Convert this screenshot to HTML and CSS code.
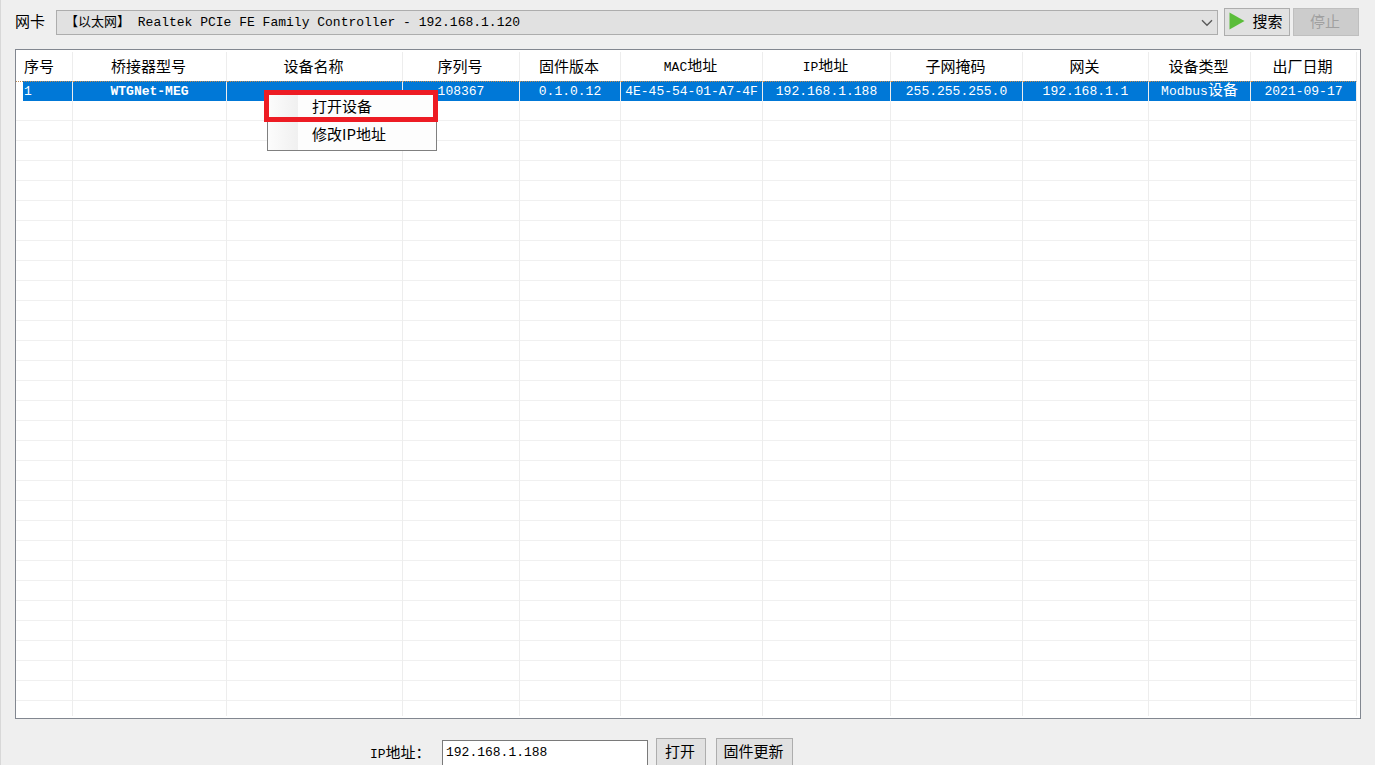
FILE: index.html
```html
<!DOCTYPE html>
<html lang="zh-CN">
<head>
<meta charset="utf-8">
<title>设备搜索</title>
<link rel="stylesheet" href="styles.css">
</head>
<body>
<main class="window">
  <form class="toolbar">
    <label class="toolbar-label" for="adapter">网卡</label>
    <div class="combo">
      <select class="combo-select" id="adapter">
        <option>【以太网】 Realtek PCIe FE Family Controller - 192.168.1.120</option>
      </select>
      <svg class="combo-arrow" viewBox="0 0 12 8" aria-hidden="true"><path d="M1 1.2 6 6.2 11 1.2" fill="none" stroke="#5a5a5a" stroke-width="1.4"/></svg>
    </div>
    <button class="btn btn-search" type="button">
      <svg class="play" viewBox="0 0 16 18" aria-hidden="true"><path d="M0.500 0.500 15.500 9 0.500 17.500z" fill="#5bbd3a"/></svg>
      搜索
    </button>
    <button class="btn btn-stop" type="button" disabled>停止</button>
  </form>

  <section class="panel">
    <table class="grid">
      <colgroup>
        <col class="c-index"><col class="c-model"><col class="c-name"><col class="c-serial"><col class="c-firmware"><col class="c-mac"><col class="c-ip"><col class="c-mask"><col class="c-gateway"><col class="c-type"><col class="c-date">
      </colgroup>
      <thead>
        <tr>
          <th class="index">序号</th>
          <th>桥接器型号</th>
          <th>设备名称</th>
          <th>序列号</th>
          <th>固件版本</th>
          <th><span class="latin">MAC</span>地址</th>
          <th><span class="latin">IP</span>地址</th>
          <th>子网掩码</th>
          <th>网关</th>
          <th>设备类型</th>
          <th>出厂日期</th>
        </tr>
      </thead>
      <tbody>
        <tr class="selected">
          <td class="index">1</td>
          <td class="model">WTGNet-MEG</td>
          <td></td>
          <td>108367</td>
          <td>0.1.0.12</td>
          <td>4E-45-54-01-A7-4F</td>
          <td>192.168.1.188</td>
          <td>255.255.255.0</td>
          <td>192.168.1.1</td>
          <td>Modbus<span class="cjk">设备</span></td>
          <td>2021-09-17</td>
        </tr>
        <tr class="blank"><td></td><td></td><td></td><td></td><td></td><td></td><td></td><td></td><td></td><td></td><td></td></tr>
      </tbody>
    </table>
    <div class="menu">
      <button class="menu-item marked" type="button">打开设备</button>
      <button class="menu-item" type="button">修改IP地址</button>
    </div>
  </section>

  <form class="footer">
    <label class="footer-label" for="ip"><span class="latin">IP</span>地址：</label>
    <input class="ip-input" id="ip" type="text" value="192.168.1.188">
    <button class="btn btn-open" type="button">打开</button>
    <button class="btn btn-update" type="button">固件更新</button>
  </form>
</main>
</body>
</html>
```
FILE: styles.css
```css
* {
  box-sizing: border-box;
}

body {
  margin: 0;
  overflow: hidden;
  background: #efefef;
  color: #000;
  font-family: "Noto Sans CJK SC", sans-serif;
  font-size: 15px;
  line-height: 20px;
}

.window {
  display: flex;
  flex-direction: column;
  height: 100vh;
  padding: 8px 14px 0;
  border-left: 1px solid #d8d8d8;
}

.latin {
  font-family: "Liberation Mono", monospace;
  font-size: 13px;
  line-height: 16px;
}

.cjk {
  font-family: "Noto Sans CJK SC", sans-serif;
  font-size: 15px;
}

/* Toolbar */
.toolbar {
  display: flex;
  align-items: center;
  height: 28px;
  margin: 0 2px 13px 0;
}

.toolbar-label {
  width: 41px;
  padding-bottom: 2px;
}

.combo {
  position: relative;
  flex: 1;
  margin-right: 6px;
}

.combo-select {
  display: block;
  width: 100%;
  height: 25px;
  padding: 0 24px 0 8px;
  border: 1px solid #adadad;
  border-radius: 0;
  background: #e1e1e1;
  color: #000;
  font-family: "Liberation Mono", "Noto Sans CJK SC", monospace;
  font-size: 13px;
  appearance: none;
}

.combo-arrow {
  position: absolute;
  top: 9px;
  right: 5px;
  width: 12px;
  height: 8px;
  pointer-events: none;
}

.btn {
  display: flex;
  align-items: center;
  justify-content: center;
  height: 28px;
  padding: 0 2px 2px 0;
  border: 1px solid #adadad;
  background: #e1e1e1;
  color: #000;
  font: inherit;
}

.btn-search {
  gap: 7px;
  width: 66px;
  margin-right: 3px;
}

.play {
  width: 16px;
  height: 18px;
}

.btn-stop {
  width: 66px;
  border-color: #bfbfbf;
  background: #ccc;
  color: #a0a0a0;
}

/* Device list */
.panel {
  position: relative;
  flex: 1;
  min-height: 0;
  padding: 2px 3px 2px 0;
  border: 1px solid #828790;
  background: #fff;
}

.grid {
  width: 100%;
  height: 100%;
  border-collapse: separate;
  border-spacing: 0;
  table-layout: fixed;
}

.c-index { width: 57px; }
.c-model { width: 154px; }
.c-serial { width: 117px; }
.c-firmware { width: 101px; }
.c-mac { width: 142px; }
.c-ip { width: 128px; }
.c-mask { width: 132px; }
.c-gateway { width: 126px; }
.c-type { width: 102px; }
.c-date { width: 106px; }

.grid th,
.grid td {
  padding: 0;
  border-right: 1px solid #ededed;
  font-weight: 400;
  text-align: center;
  white-space: nowrap;
}

.grid th {
  height: 29px;
  padding: 0 2px 2px 0;
}

.grid .index {
  padding-left: 8px;
  text-align: left;
}

.selected td {
  height: 20px;
  border-top: 1px dotted #c08a50;
  background: #0078d7;
  color: #fff;
  font-family: "Liberation Mono", monospace;
  font-size: 13px;
  line-height: 18px;
}

.selected .cjk {
  line-height: 14px;
}

.selected .index {
  background: linear-gradient(to right, #fff 7px, #0078d7 7px);
}

.selected .model {
  font-weight: 700;
}

.blank td {
  background: repeating-linear-gradient(to bottom, #fff 0, #fff 19px, #f0f0f0 19px, #f0f0f0 20px);
}

/* Context menu over the selected row */
.menu {
  position: absolute;
  top: 41px;
  left: 251px;
  width: 170px;
  border: 1px solid #808080;
  padding: 1px 0;
  background: linear-gradient(to right, #fcfcfc 0, #f0f0f0 30px, #fdfdfd 30px);
}

.menu-item {
  position: relative;
  display: block;
  width: 100%;
  height: 28px;
  padding: 0 0 2px 44px;
  border: 0;
  background: none;
  color: #000;
  font: inherit;
  text-align: left;
}

.marked::after {
  content: "";
  position: absolute;
  inset: -3px -2px -1px -4px;
  border: 5px solid #ed1c24;
}

/* Address bar */
.footer {
  display: flex;
  flex: none;
  align-items: flex-start;
  height: 46px;
  padding: 19px 0 0 355px;
}

.footer-label {
  width: 72px;
  padding-top: 4px;
}

.ip-input {
  width: 206px;
  height: 28px;
  margin: 2px 8px 0 0;
  padding: 0 3px 4px;
  border: 1px solid #7a7a7a;
  background: #fff;
  color: #000;
  font-family: "Liberation Mono", monospace;
  font-size: 13px;
}

.btn-open {
  width: 50px;
  margin-right: 10px;
}

.btn-update {
  width: 77px;
}
```
